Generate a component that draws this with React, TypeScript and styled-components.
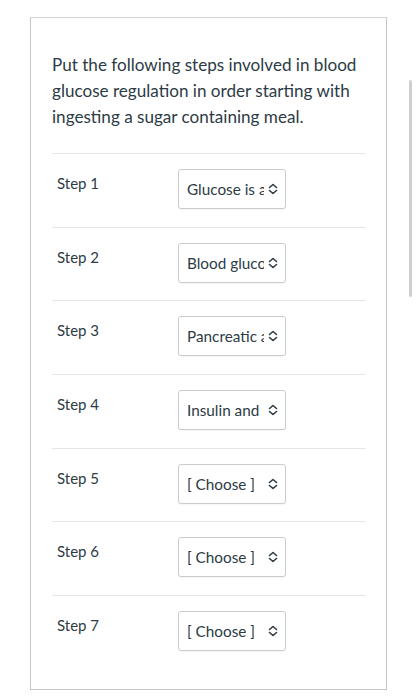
import React from 'react'
import styled, {createGlobalStyle} from "styled-components";

const steps = [
    'Glucose is absorbed into the blood',
    'Blood glucose levels rise',
    'Pancreatic activity increases',
    'Insulin and receptors bind',
    '[ Choose ]',
    '[ Choose ]',
    '[ Choose ]',
]

const GlobalStyle = createGlobalStyle`
    html, body {
        margin: 0;
        padding: 0;
        background: #ffffff;
    }
    body {
        font-family: Lato, "Open Sans", sans-serif;
        color: #2d3b45;
    }
`

const Chevrons = () => (
    <svg width="10" height="12" viewBox="0 0 10 12" fill="none">
        <path d="M1.5 4.5 L5 1.5 L8.5 4.5" stroke="#2d3b45" strokeWidth="1.6" strokeLinecap="round" strokeLinejoin="round"/>
        <path d="M1.5 7.5 L5 10.5 L8.5 7.5" stroke="#2d3b45" strokeWidth="1.6" strokeLinecap="round" strokeLinejoin="round"/>
    </svg>
)

export default function App() {
    return (
        <Page>
            <GlobalStyle/>
            <Card>
                <Question>
                    Put the following steps involved in blood glucose regulation in order starting with
                    ingesting a sugar containing meal.
                </Question>
                <StepList>
                    {steps.map((value, i) => (
                        <StepRow key={i}>
                            <StepLabel>Step {i + 1}</StepLabel>
                            <Select>
                                <SelectText>{value}</SelectText>
                                <Chevrons/>
                            </Select>
                        </StepRow>
                    ))}
                </StepList>
            </Card>
            <ScrollThumb/>
        </Page>
    )
}

const Page = styled.div`
    padding: 17px 0 0 30px;
    height: 700px;
    box-sizing: border-box;
`

const Card = styled.div`
    width: 357px;
    height: 673px;
    box-sizing: border-box;
    border: 1px solid #c2c6c9;
    border-top-color: #cfd3d6;
    padding: 34px 20px 0 21px;
`

const Question = styled.p`
    margin: 0 0 23px 0;
    font-size: 17.1px;
    line-height: 26px;
    color: #2d3b45;
`

const StepList = styled.div`
    display: flex;
    flex-direction: column;
`

const StepRow = styled.div`
    display: flex;
    align-items: flex-start;
    height: 73.67px;
    box-sizing: border-box;
    padding-top: 15px;
    border-top: 1px solid #e4e6e8;
`

const StepLabel = styled.div`
    width: 121px;
    padding: 5px 0 0 5px;
    font-size: 15px;
    line-height: 18px;
    color: #2d3b45;
`

const Select = styled.div`
    display: flex;
    align-items: center;
    width: 108px;
    height: 40px;
    box-sizing: border-box;
    border: 1px solid #c7cdd1;
    border-radius: 3px;
    padding: 0 7px 0 8px;
    gap: 4px;
    background: #fff;
    box-shadow: 0 1px 1px rgba(0, 0, 0, 0.04);
`

const SelectText = styled.span`
    flex: 1;
    overflow: hidden;
    white-space: nowrap;
    text-overflow: clip;
    font-size: 15.3px;
    color: #2d3b45;
`

const ScrollThumb = styled.div`
    position: fixed;
    left: 409px;
    top: 80px;
    width: 3px;
    height: 217px;
    border-radius: 2px;
    background: #cfcfcf;
`
